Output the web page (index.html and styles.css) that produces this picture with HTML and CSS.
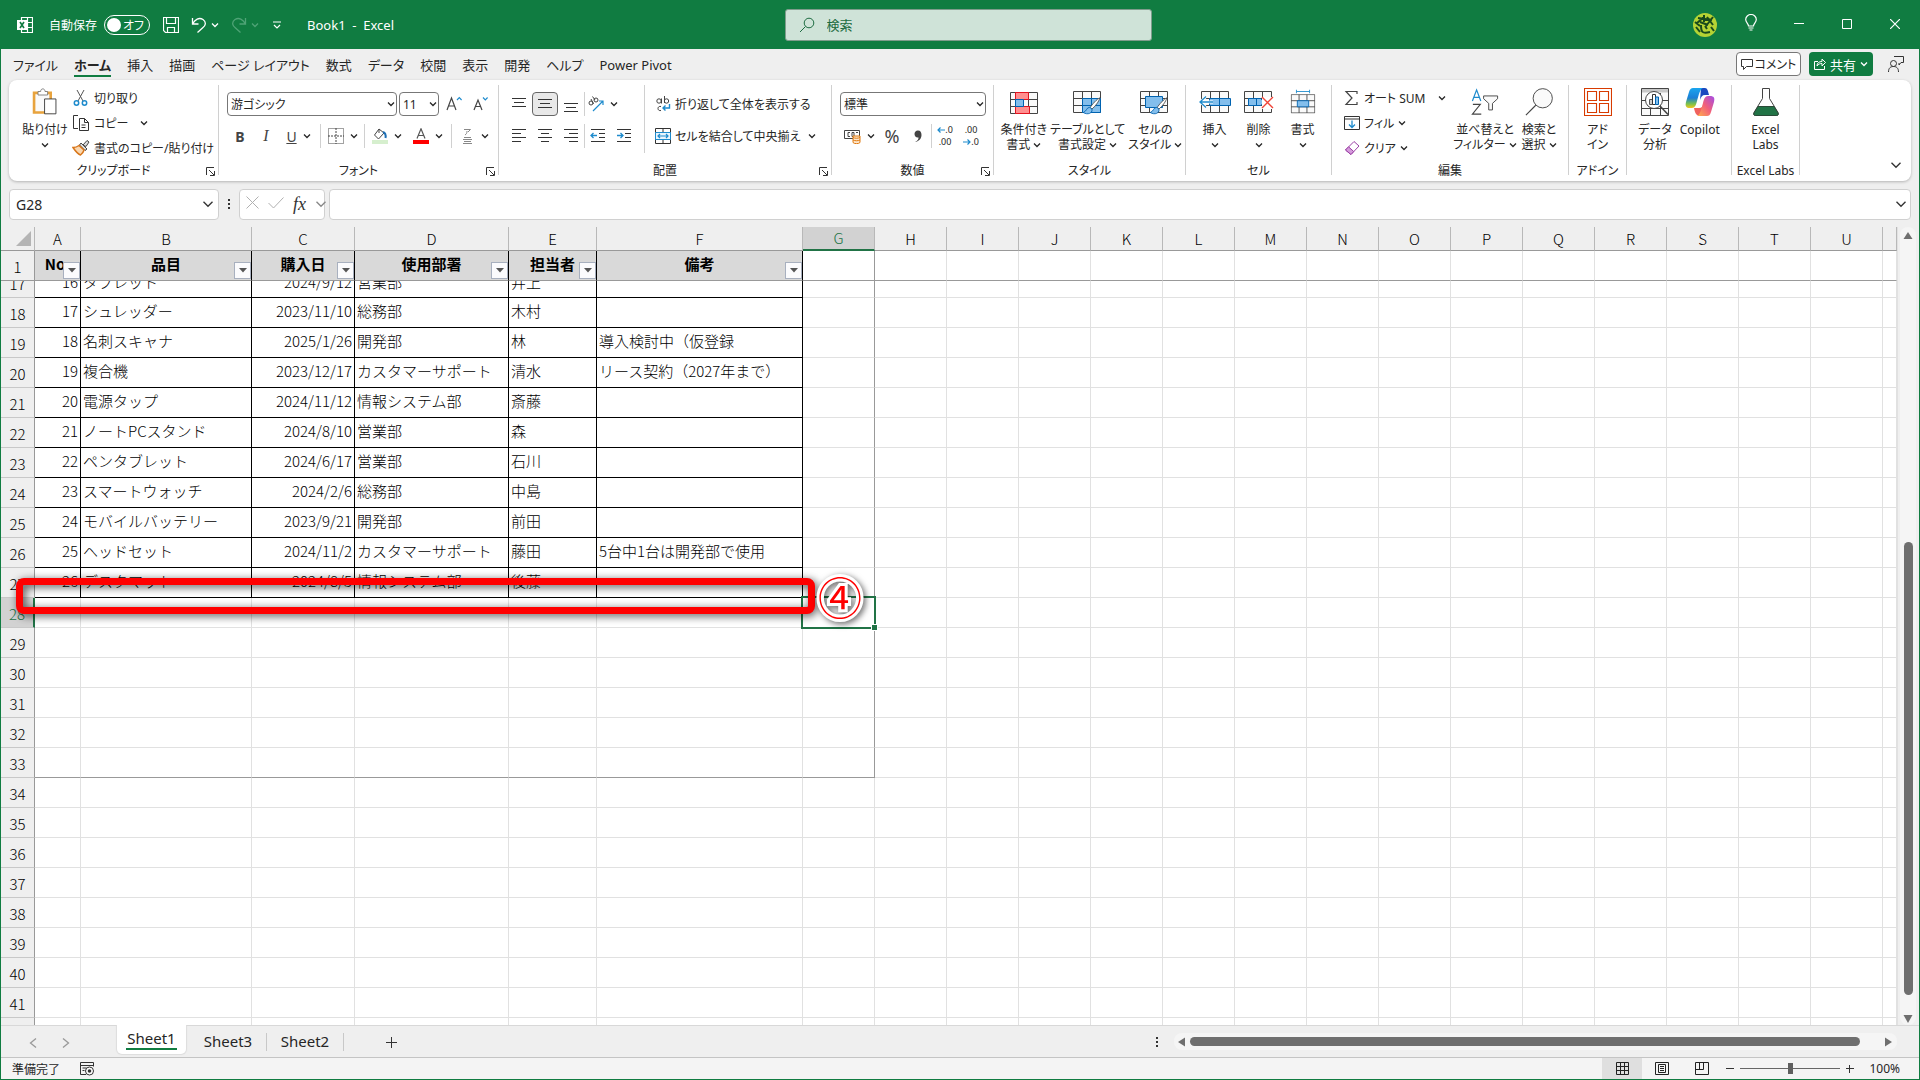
FILE: index.html
```html
<!DOCTYPE html>
<html lang="ja">
<head>
  <meta charset="UTF-8">
  <meta name="viewport" content="width=device-width, initial-scale=1.0">
  <title>Book1 - Excel</title>
  <link rel="stylesheet" href="styles.css">
</head>
<body>
  <svg class="symbols" aria-hidden="true">
    <symbol id="chev" viewBox="0 0 8 8"><path d="M1 2.500l3 3 3-3" fill="none" stroke="currentColor" stroke-width="1.300"/></symbol>
    <symbol id="launch" viewBox="0 0 9 9"><path d="M8 .5H.5V8M3 3l5 5M8.500 4v4.500H4" fill="none" stroke="#333"/></symbol>
    <symbol id="grid" viewBox="0 0 28 22"><path d="M.5.5h27v21H.5zM.5 7.500h27M.5 14.500h27M9.500.5v21M18.500.5v21" fill="#fafafa" stroke="#444"/></symbol>
    <symbol id="brush" viewBox="0 0 22 22"><path d="M20.500 1c-3 1-9 8-11 11l2 2C15 11 20 5 20.500 1z" fill="#fff" stroke="#444"/><path d="M9 12c-4 0-3 4-7.500 6 5 3 11 1 10-4z" fill="#83beec" stroke="#0063b1"/></symbol>
  </svg>

  <!-- Title bar -->
  <header class="titlebar">
    <div class="title-left">
      <svg class="app-icon" width="16" height="16" viewBox="0 0 16 16"><path d="M4.500.5h11v15h-11zM4 5.500h12M4 10.500h12M10.500 0v16" fill="none" stroke="#fff" stroke-width="1.200"/><rect y="3" width="10" height="10" fill="#fff"/><path d="M3 5l4 6M7 5l-4 6" stroke="#107c41" stroke-width="1.600"/></svg>
      <label class="autosave">自動保存
        <button class="toggle" role="switch" aria-checked="false"><i></i>オフ</button>
      </label>
      <button class="icon-btn save" aria-label="上書き保存"><svg width="16" height="16" viewBox="0 0 16 16"><path d="M.5.5h15v15h-13l-2-2zM3.500.5v6h9v-6M4.500 15.500v-5h7v5" fill="none" stroke="#fff" stroke-width="1.200"/></svg></button>
      <button class="icon-btn undo" aria-label="元に戻す"><svg width="16" height="16" viewBox="0 0 16 16"><path d="M1.500 1v6h6M1.500 7C4 2.500 8 0 12 2.500c4 3 2 6.500 0 8L6.500 15.500" fill="none" stroke="#fff" stroke-width="1.300"/></svg><svg class="chev"><use href="#chev"/></svg></button>
      <button class="icon-btn redo" aria-label="やり直し"><svg width="16" height="16" viewBox="0 0 16 16"><path d="M14.500 1v6h-6M14.500 7C12 2.500 8 0 4 2.500c-4 3-2 6.500 0 8l5.500 5" fill="none" stroke="currentColor" stroke-width="1.300"/></svg><svg class="chev"><use href="#chev"/></svg></button>
      <button class="icon-btn custom" aria-label="カスタマイズ"><svg width="8" height="8" viewBox="0 0 8 8"><path d="M0 1h8M1 4l3 3 3-3" fill="none" stroke="#fff" stroke-width="1.200"/></svg></button>
      <span class="doc-name">Book1&nbsp; -&nbsp; Excel</span>
    </div>
    <div class="search">
      <svg width="16" height="16" viewBox="0 0 16 16"><circle cx="10" cy="6" r="4.800" fill="none" stroke="#1c6b40"/><path d="M6.500 9.500L1 15" stroke="#1c6b40"/></svg>
      <input type="search" placeholder="検索" aria-label="検索">
    </div>
    <div class="title-right">
      <svg class="avatar" width="24" height="24" viewBox="0 0 24 24"><circle cx="12" cy="12" r="12" fill="#b5d334"/><path d="M5 5l14 2M4 10l7-6M11 2v7M7 9l8 3M14 4l6 8M20 4l-7 9M3 14l4 5M8 12c0 7 1 9 9 7M12 13l2 3M18 14l3 4M2 9l5 4" stroke="#184a1c" stroke-width="2" fill="none"/></svg>
      <button aria-label="ヒント"><svg width="12" height="17" viewBox="0 0 12 17"><path d="M3.500 12C3.500 9.500.700 8.500.700 5.500a5.300 5 0 0 1 10.600 0C11.300 8.500 8.500 9.500 8.500 12zM3.500 14h5M4.500 16h3" fill="none" stroke="#fff" stroke-width="1.200"/></svg></button>
      <button aria-label="最小化"><svg width="10" height="10" viewBox="0 0 10 10"><path d="M0 4.500h10" stroke="#fff"/></svg></button>
      <button aria-label="最大化"><svg width="10" height="10" viewBox="0 0 10 10"><path d="M.5.5h9v9h-9z" fill="none" stroke="#fff"/></svg></button>
      <button aria-label="閉じる"><svg width="10" height="10" viewBox="0 0 10 10"><path d="M0 0l10 10M10 0L0 10" stroke="#fff" stroke-width="1.200"/></svg></button>
    </div>
  </header>

  <nav class="tabs">
    <a href="#">ファイル</a>
    <a href="#" class="active">ホーム</a>
    <a href="#">挿入</a>
    <a href="#">描画</a>
    <a href="#">ページ レイアウト</a>
    <a href="#">数式</a>
    <a href="#">データ</a>
    <a href="#">校閲</a>
    <a href="#">表示</a>
    <a href="#">開発</a>
    <a href="#">ヘルプ</a>
    <a href="#">Power Pivot</a>
    <div class="tab-actions">
      <button class="comment-btn"><svg width="12" height="12" viewBox="0 0 12 12"><path d="M.5 1.500h11v7h-6l-3 3v-3h-2z" fill="none" stroke="#333"/></svg>コメント</button>
      <button class="share-btn"><svg width="12" height="12" viewBox="0 0 12 12"><path d="M4 3.500H.5v8h10V8M3 8c0-3 2-4.500 5-4.500V1l3.500 3.500L8 8V5.500C6 5.500 4.500 6 3 8z" fill="none" stroke="#fff"/></svg>共有<svg class="chev"><use href="#chev"/></svg></button>
      <button class="people-btn" aria-label="共同編集"><svg width="16" height="16" viewBox="0 0 16 16"><path d="M6 .5h9.500v6H13l-2 2.500V7M.5 16c0-4 2-5.500 5-5.500s5 1.500 5 5.500" fill="none" stroke="#333"/><circle cx="5.500" cy="7.500" r="3" fill="none" stroke="#333"/></svg></button>
    </div>
  </nav>

  <!-- Ribbon -->
  <section class="ribbon">
    <div class="group g-clip">
      <div class="body">
        <button class="big paste"><svg width="28" height="32" viewBox="0 0 28 32"><path d="M1.500 5.500h19v22.500h-19z" fill="#fafafa" stroke="#e8a33d" stroke-width="3"/><path d="M6 8V4h3c0-4 5-4 5 0h3v4z" fill="#fff" stroke="#777"/><path d="M13.500 12.500h13v17h-13z" fill="#fff" stroke="#333"/></svg><span>貼り付け</span><svg class="chev"><use href="#chev"/></svg></button>
        <div class="stack">
          <button class="small"><svg width="18" height="18" viewBox="0 0 18 18"><path d="M5 1l6 11M12 1L6 12" stroke="#555" fill="none"/><circle cx="4.500" cy="14" r="2.200" fill="none" stroke="#1e8bcd" stroke-width="1.500"/><circle cx="12.500" cy="14" r="2.200" fill="none" stroke="#1e8bcd" stroke-width="1.500"/></svg>切り取り</button>
          <button class="small"><svg width="18" height="18" viewBox="0 0 18 18"><path d="M6 14.500H1.500v-13H6M7.500 4.500h5l4 4v8h-9zM12.500 4.500v4h4M9.500 11h4M9.500 13.500h4" fill="none" stroke="#333"/></svg>コピー<svg class="chev far"><use href="#chev"/></svg></button>
          <button class="small"><svg width="18" height="18" viewBox="0 0 18 18"><path d="M11 6l4-4.500 2 1.500-3 4.500zM9 4l6 6-2 1.500L7.500 6z" fill="#ddd" stroke="#444"/><path d="M7 6.500C5 8 3 8.500 1 8.500c2 3 4 6 7.500 7.500 2-1.500 3-3 3.500-5z" fill="#fad7b0" stroke="#d8761a" stroke-width="1.500"/></svg>書式のコピー/貼り付け</button>
        </div>
      </div>
      <div class="foot">クリップボード<svg class="launch"><use href="#launch"/></svg></div>
    </div>

    <div class="group g-font">
      <div class="body rows">
        <div class="row">
          <span class="select"><select class="font-name" aria-label="フォント"><option>游ゴシック</option></select><svg class="chev"><use href="#chev"/></svg></span>
          <span class="select"><select class="font-size" aria-label="フォント サイズ"><option>11</option></select><svg class="chev"><use href="#chev"/></svg></span>
          <button class="tool" aria-label="拡大"><svg width="16" height="16" viewBox="0 0 16 16"><path d="M1 14L5.500 2 10 14M2.500 10h6" fill="none" stroke="#444" stroke-width="1.200"/><path d="M11 4l2.300-2.300L15.600 4" fill="none" stroke="#1e8bcd" stroke-width="1.200"/></svg></button>
          <button class="tool" aria-label="縮小"><svg width="16" height="16" viewBox="0 0 16 16"><path d="M2 14L6 4l4 10M3.500 10.500h5" fill="none" stroke="#444" stroke-width="1.200"/><path d="M11 1.500l2.300 2.300 2.300-2.300" fill="none" stroke="#1e8bcd" stroke-width="1.200"/></svg></button>
        </div>
        <div class="row">
          <button class="tool"><b>B</b></button>
          <button class="tool"><em>I</em></button>
          <button class="tool drop"><u>U</u><svg class="chev"><use href="#chev"/></svg></button>
          <i class="sep"></i>
          <button class="tool drop" aria-label="罫線"><svg width="16" height="16" viewBox="0 0 16 16"><path d="M.5.5h15v15H.5z" fill="none" stroke="#444" stroke-dasharray="1 1"/><path d="M8 0v16M0 8h16" stroke="#444" stroke-dasharray="2 1"/></svg><svg class="chev"><use href="#chev"/></svg></button>
          <i class="sep"></i>
          <button class="tool drop" aria-label="塗りつぶし"><svg width="16" height="16" viewBox="0 0 16 16"><path d="M7 1L2.500 7l4 4 5.500-6zM7 1v4" fill="#fff" stroke="#444"/><path d="M11 4c3 1 3 3 2.500 6" fill="none" stroke="#1e6fb5" stroke-width="2"/><path d="M0 12h16v4H0z" fill="#d6efce"/></svg><svg class="chev"><use href="#chev"/></svg></button>
          <button class="tool drop wide" aria-label="フォントの色"><svg width="16" height="16" viewBox="0 0 16 16"><path d="M4 10.500L8 .8l4 9.700M5.300 7.500h5.400" fill="none" stroke="#555" stroke-width="1.200"/><path d="M0 12h16v4H0z" fill="#f00"/></svg><svg class="chev"><use href="#chev"/></svg></button>
          <i class="sep"></i>
          <button class="tool drop" aria-label="ふりがな"><svg width="16" height="16" viewBox="0 0 16 16"><path d="M5 1.500h6.500L9 4M8 3c0 2-.5 3-2 4M5 9.500h7M4 11.500h9M5 13.500h7M4 15.500h9" fill="none" stroke="#888"/></svg><svg class="chev"><use href="#chev"/></svg></button>
        </div>
      </div>
      <div class="foot">フォント<svg class="launch"><use href="#launch"/></svg></div>
    </div>

    <div class="group g-align">
      <div class="body">
        <div class="rows align-tools">
          <div class="row">
            <button class="tool" aria-label="上揃え"><svg width="16" height="16" viewBox="0 0 16 16"><path d="M1 2.500h14M3 6.500h10M1 10.500h14" stroke="#333"/></svg></button>
            <button class="tool pressed" aria-label="上下中央揃え"><svg width="16" height="16" viewBox="0 0 16 16"><path d="M1 3.500h14M3 7.500h10M1 11.500h14" stroke="#333"/></svg></button>
            <button class="tool" aria-label="下揃え"><svg width="16" height="16" viewBox="0 0 16 16"><path d="M1 7.500h14M3 11.500h10M1 15.500h14" stroke="#333"/></svg></button>
            <i class="sep"></i>
            <button class="tool drop" aria-label="方向"><svg width="16" height="16" viewBox="0 0 16 16"><circle cx="3" cy="7" r="2" fill="none" stroke="#444"/><circle cx="8" cy="4" r="2" fill="none" stroke="#444"/><path d="M3 3l2.500 5M4.500.5L7 4" fill="none" stroke="#444"/><path d="M5 15L15 5M15 9V5h-4" fill="none" stroke="#1e8bcd" stroke-width="1.200"/></svg><svg class="chev"><use href="#chev"/></svg></button>
          </div>
          <div class="row">
            <button class="tool" aria-label="左揃え"><svg width="16" height="16" viewBox="0 0 16 16"><path d="M1 1.500h14M1 5.500h9M1 9.500h14M1 13.500h9" stroke="#333"/></svg></button>
            <button class="tool" aria-label="中央揃え"><svg width="16" height="16" viewBox="0 0 16 16"><path d="M1 1.500h14M4 5.500h8M1 9.500h14M4 13.500h8" stroke="#333"/></svg></button>
            <button class="tool" aria-label="右揃え"><svg width="16" height="16" viewBox="0 0 16 16"><path d="M1 1.500h14M6 5.500h9M1 9.500h14M6 13.500h9" stroke="#333"/></svg></button>
            <i class="sep"></i>
            <button class="tool" aria-label="インデントを減らす"><svg width="16" height="16" viewBox="0 0 16 16"><path d="M1 1.500h14M9 5.500h6M9 9.500h6M1 13.500h14" stroke="#333"/><path d="M7 7.500H1M3.500 5L1 7.500 3.500 10" stroke="#1e8bcd" fill="none" stroke-width="1.300"/></svg></button>
            <button class="tool" aria-label="インデントを増やす"><svg width="16" height="16" viewBox="0 0 16 16"><path d="M1 1.500h14M9 5.500h6M9 9.500h6M1 13.500h14" stroke="#333"/><path d="M1 7.500h6M4.500 5L7 7.500 4.500 10" stroke="#1e8bcd" fill="none" stroke-width="1.300"/></svg></button>
          </div>
        </div>
        <div class="rows wrap-tools">
          <button class="small"><svg width="16" height="16" viewBox="0 0 16 16"><circle cx="4" cy="5" r="2.200" fill="none" stroke="#444"/><path d="M6.500 2.500v5M9.500 0v7M6 10.500c-4-1-4 5 0 4" fill="none" stroke="#444"/><circle cx="11.500" cy="5" r="2.200" fill="none" stroke="#444"/><path d="M14.500 8v4H8M10.500 9.500L8 12l2.500 2.500" fill="none" stroke="#1e8bcd" stroke-width="1.400"/></svg>折り返して全体を表示する</button>
          <button class="small"><svg width="16" height="16" viewBox="0 0 16 16"><path d="M.5.5h15v15H.5zM8 0v4M8 12v4" fill="none" stroke="#333"/><path d="M.5 4.500h15v7H.5z" fill="#eaf5fd" stroke="#1e8bcd"/><path d="M3 8h10M5 6L3 8l2 2M11 6l2 2-2 2" fill="none" stroke="#1e8bcd" stroke-width="1.200"/></svg>セルを結合して中央揃え<svg class="chev end"><use href="#chev"/></svg></button>
        </div>
      </div>
      <div class="foot">配置<svg class="launch"><use href="#launch"/></svg></div>
    </div>

    <div class="group g-num">
      <div class="body rows">
        <div class="row">
          <span class="select"><select class="num-format" aria-label="表示形式"><option>標準</option></select><svg class="chev"><use href="#chev"/></svg></span>
        </div>
        <div class="row">
          <button class="tool drop" aria-label="通貨"><svg width="17" height="16" viewBox="0 0 17 16"><path d="M.5 2.500h15v8H.5z" fill="#fff" stroke="#444"/><path d="M6 4.500H4v4h2M8 4.500h2v4H8zM12 4.500h2" fill="none" stroke="#444"/><path d="M9 8h7v6.500c-1 1.500-6 1.500-7 0z" fill="#fde8cf" stroke="#e07a10"/><path d="M9 9.500c2 1 5 1 7 0M9 12c2 1 5 1 7 0" fill="none" stroke="#e07a10"/></svg><svg class="chev"><use href="#chev"/></svg></button>
          <button class="tool pct">%</button>
          <button class="tool comma" aria-label="桁区切り"><svg width="10" height="16" viewBox="0 0 10 16"><path d="M2 14c3-1.500 3.500-3 3.500-4.500C3 10 1.500 8 1.500 6A3.300 3.300 0 0 1 5 2.500C7.500 2.500 8.500 4.500 8.500 7 8.500 10 6.500 13.500 2 14z" fill="#444"/></svg></button>
          <i class="sep"></i>
          <button class="tool dec"><svg width="8" height="6" viewBox="0 0 8 6"><path d="M8 3H1M3.500.5L1 3l2.500 2.500" stroke="#1e8bcd" fill="none" stroke-width="1.200"/></svg>.0<br>.00</button>
          <button class="tool dec">.00<br><svg width="8" height="6" viewBox="0 0 8 6"><path d="M0 3h7M4.500.5L7 3 4.500 5.500" stroke="#1e8bcd" fill="none" stroke-width="1.200"/></svg>.0</button>
        </div>
      </div>
      <div class="foot">数値<svg class="launch"><use href="#launch"/></svg></div>
    </div>

    <div class="group g-style">
      <div class="body">
        <button class="big"><svg width="28" height="28" viewBox="0 0 28 28"><use href="#grid" y="4" width="28" height="22"/><path d="M5.500 4.500h13v7h-13zM5.500 18.500h14v7h-14z" fill="#ff8f8f" stroke="#e3131f"/><path d="M5.500 11.500h8v7h-8z" fill="#83beec" stroke="#0063b1"/></svg><span>条件付き<br>書式 <svg class="chev"><use href="#chev"/></svg></span></button>
        <button class="big"><svg width="30" height="28" viewBox="0 0 30 28"><use href="#grid" y="3" width="28" height="22"/><path d="M9.500 10.500h18v14h-18z" fill="#83beec" stroke="#0063b1"/><path d="M9.500 17.500h18M18.500 10.500v14" stroke="#0063b1"/><use href="#brush" x="8" y="9" width="21" height="19"/></svg><span>テーブルとして<br>書式設定 <svg class="chev"><use href="#chev"/></svg></span></button>
        <button class="big"><svg width="30" height="28" viewBox="0 0 30 28"><use href="#grid" y="3" width="28" height="22"/><path d="M5.500 8.500h17v11h-17z" fill="#83beec" stroke="#0063b1"/><use href="#brush" x="8" y="9" width="21" height="19"/></svg><span>セルの<br>スタイル <svg class="chev"><use href="#chev"/></svg></span></button>
      </div>
      <div class="foot">スタイル</div>
    </div>

    <div class="group g-cell">
      <div class="body">
        <button class="big"><svg width="32" height="28" viewBox="0 0 32 28"><use href="#grid" x="2" y="3" width="28" height="22"/><path d="M10.500 10.500h21v7h-21zM20.500 10.500v7" fill="#83beec" stroke="#0063b1"/><path d="M14 14H1.500M7 8.500L1.500 14 7 19.500" fill="none" stroke="#fff" stroke-width="3"/><path d="M14 14H1M7 8.500L1 14l6 5.500" fill="none" stroke="#1e8bcd" stroke-width="1.300"/></svg><span>挿入</span><svg class="chev"><use href="#chev"/></svg></button>
        <button class="big"><svg width="30" height="28" viewBox="0 0 30 28"><use href="#grid" y="3" width="28" height="22"/><path d="M4.500 10.500h12l4 4-4 3h-12zM12.500 10.500v7" fill="#83beec" stroke="#0063b1"/><path d="M18 9h12v12H18z" fill="#fff"/><path d="M18 9l11 11M29 9L18 20" stroke="#f04438" stroke-width="1.400"/></svg><span>削除</span><svg class="chev"><use href="#chev"/></svg></button>
        <button class="big"><svg width="28" height="32" viewBox="0 0 28 32"><use href="#grid" y="7" width="28" height="22"/><path d="M7.500 14.500h13v7h-13z" fill="#83beec" stroke="#0063b1"/><path d="M6.500 2v4M21.500 2v4M6.500 4h15" stroke="#1e8bcd"/></svg><span>書式</span><svg class="chev"><use href="#chev"/></svg></button>
      </div>
      <div class="foot">セル</div>
    </div>

    <div class="group g-edit">
      <div class="body">
        <div class="stack">
          <button class="small"><svg width="16" height="16" viewBox="0 0 16 16"><path d="M13 4V1.500H2L8 8l-6 6.500h11V12" fill="none" stroke="#444" stroke-width="1.200"/></svg>オート SUM<svg class="chev end"><use href="#chev"/></svg></button>
          <button class="small"><svg width="16" height="16" viewBox="0 0 16 16"><path d="M.5 1.500h15v13H.5zM.5 4h15" fill="none" stroke="#333"/><path d="M8 5.500v7M5 9.500l3 3 3-3" fill="none" stroke="#1e8bcd" stroke-width="1.300"/></svg>フィル<svg class="chev"><use href="#chev"/></svg></button>
          <button class="small"><svg width="16" height="16" viewBox="0 0 16 16"><path d="M10 1.500L15 6l-8 8.500L1.500 10z" fill="#fff" stroke="#9b3fa5"/><path d="M4.500 6.800L9.700 11.500 7 14.500 1.500 10z" fill="#d59bdb" stroke="#9b3fa5"/></svg>クリア<svg class="chev"><use href="#chev"/></svg></button>
        </div>
        <button class="big"><svg width="30" height="30" viewBox="0 0 30 30"><path d="M1.500 14L6 2l4.500 12M3 10h6" fill="none" stroke="#1e8bcd" stroke-width="1.300"/><path d="M2 17.500h8L1.500 28H11" fill="none" stroke="#444" stroke-width="1.200"/><path d="M13.500 8.500h15v3l-5.500 5v7h-4v-7l-5.500-5z" fill="#fafafa" stroke="#444"/></svg><span>並べ替えと<br>フィルター <svg class="chev"><use href="#chev"/></svg></span></button>
        <button class="big"><svg width="30" height="30" viewBox="0 0 30 30"><circle cx="19" cy="11" r="10.300" fill="#fafafa" stroke="#444"/><path d="M11.500 18.500L1 29" stroke="#444" stroke-width="1.200"/></svg><span>検索と<br>選択 <svg class="chev"><use href="#chev"/></svg></span></button>
      </div>
      <div class="foot">編集</div>
    </div>

    <div class="group g-addin">
      <div class="body">
        <button class="big"><svg width="28" height="28" viewBox="0 0 28 28"><path d="M.5.5h27v27H.5zM3.500 3.500h9v9h-9zM15.500 3.500h9v9h-9zM3.500 15.500h9v9h-9zM15.500 15.500h9v9h-9z" fill="#fff" stroke="#d83b01" stroke-width="1.100"/></svg><span>アド<br>イン</span></button>
      </div>
      <div class="foot">アドイン</div>
    </div>

    <div class="group g-data">
      <div class="body">
        <button class="big"><svg width="28" height="28" viewBox="0 0 28 28"><path d="M.5.5h27v27H.5zM.5 12.500h27M.5 20.500h27M9.500 5v22M19.500 5v22" fill="#fafafa" stroke="#444"/><path d="M1 1h26v3.500H1z" fill="#c8c8c8"/><circle cx="13" cy="12" r="8.500" fill="#fff" stroke="#444"/><path d="M19 18l8 8.500" stroke="#444" stroke-width="1.500"/><path d="M8.500 11.500h3v5h-3z" fill="#ccc" stroke="#555"/><path d="M11.500 6.500h3v10h-3z" fill="#fff" stroke="#333"/><path d="M14.500 9h3v7.500h-3z" fill="#83beec" stroke="#0063b1"/></svg><span>データ<br>分析</span></button>
        <button class="big"><svg width="30" height="28" viewBox="0 0 30 28">
          <defs>
            <linearGradient id="cp1" x1="0" y1="0" x2="0" y2="1"><stop offset="0" stop-color="#1aa5ee"/><stop offset=".5" stop-color="#1b7fd6"/><stop offset=".8" stop-color="#7dc34a"/><stop offset="1" stop-color="#f4c61c"/></linearGradient>
            <linearGradient id="cp2" x1="1" y1="0" x2="0" y2="1"><stop offset="0" stop-color="#a24be8"/><stop offset=".5" stop-color="#f2607a"/><stop offset="1" stop-color="#ffb04a"/></linearGradient>
          </defs>
          <path d="M16 0h4c2.500 0 3 3 4 7h-4c-3 0-4 2-5 5z" fill="#1b49c0"/>
          <path d="M7 28c-1 0 6 0 8 0-3 0-5-2-6-8h5c3 0 4-2 5-5l3 3-6 10z" fill="#f0625d"/>
          <path d="M8 0h10c-3 1-4 6-6 13-1 4-2 7-5 7H5c-4 0-5-2-4-6L4 4c1-3 2-4 4-4z" fill="url(#cp1)"/>
          <path d="M22 28H12c3-1 4-6 6-13 1-4 2-7 5-7h2c4 0 5 2 4 6l-3 10c-1 3-2 4-4 4z" fill="url(#cp2)"/></svg><span>Copilot</span></button>
      </div>
      <div class="foot"></div>
    </div>

    <div class="group g-labs">
      <div class="body">
        <button class="big"><svg width="28" height="28" viewBox="0 0 28 28"><path d="M10.500.5h7v10l8.500 14c1 2 0 3-1.500 3h-21C2 27.500 1 26.500 2 24.500l8.500-14z" fill="#fff" stroke="#444"/><path d="M6 18.500h16l4 6.500c.5 1.500 0 2.500-1.500 2.500h-21C2 27.500 1.500 26.500 2 25z" fill="#217346" stroke="#2a4a38"/></svg><span>Excel<br>Labs</span></button>
      </div>
      <div class="foot">Excel Labs</div>
    </div>
    <button class="collapse" aria-label="リボンを折りたたむ"><svg width="12" height="12" viewBox="0 0 8 8"><path d="M1 2.500l3 3 3-3" fill="none" stroke="#333" stroke-width=".9"/></svg></button>
  </section>

  <!-- Formula bar -->
  <section class="formula">
    <div class="name-box"><input type="text" value="G28" aria-label="名前ボックス"><svg width="12" height="12" viewBox="0 0 8 8"><path d="M1 2.500l3 3 3-3" fill="none" stroke="#333" stroke-width=".9"/></svg></div>
    <svg class="dots" width="2" height="10" viewBox="0 0 2 10"><path d="M0 0h2v2H0zM0 4h2v2H0zM0 8h2v2H0z" fill="#333"/></svg>
    <div class="fx-box">
      <button aria-label="キャンセル"><svg width="13" height="13" viewBox="0 0 13 13"><path d="M.5.5l12 12M12.500.5l-12 12" stroke="#b0b0b0"/></svg></button>
      <button aria-label="入力"><svg width="16" height="12" viewBox="0 0 16 12"><path d="M.5 6l5 5 10-10.500" fill="none" stroke="#b0b0b0"/></svg></button>
      <button class="fx">fx</button>
      <svg width="12" height="12" viewBox="0 0 8 8"><path d="M1 2.500l3 3 3-3" fill="none" stroke="#888" stroke-width=".9"/></svg>
    </div>
    <div class="formula-input"><input type="text" aria-label="数式バー"><svg width="12" height="12" viewBox="0 0 8 8"><path d="M1 2.500l3 3 3-3" fill="none" stroke="#333" stroke-width=".9"/></svg></div>
  </section>

  <!-- Sheet -->
  <main class="sheet">
    <div class="grid">
      <table>
        <colgroup id="cols"></colgroup>
        <thead id="head"></thead>
        <tbody id="rows"></tbody>
      </table>
      <div class="mark-box"></div>
      <div class="mark-num">④</div>
    </div>
    <div class="vscroll">
      <svg width="10" height="8" viewBox="0 0 10 8"><path d="M5 0l4.500 7h-9z" fill="#6f6f6f"/></svg>
      <div class="v-track"><div class="v-thumb"></div></div>
      <svg width="10" height="8" viewBox="0 0 10 8"><path d="M.5 0h9L5 8z" fill="#6f6f6f"/></svg>
    </div>
  </main>

  <nav class="sheet-tabs">
    <button class="nav" aria-label="前へ"><svg width="8" height="10" viewBox="0 0 8 10"><path d="M7 .5L1.500 5 7 9.500" fill="none" stroke="#999" stroke-width="1.300"/></svg></button>
    <button class="nav" aria-label="次へ"><svg width="8" height="10" viewBox="0 0 8 10"><path d="M1 .5L6.500 5 1 9.500" fill="none" stroke="#999" stroke-width="1.300"/></svg></button>
    <a href="#" class="sheet-tab active"><span>Sheet1</span></a>
    <a href="#" class="sheet-tab">Sheet3</a>
    <a href="#" class="sheet-tab">Sheet2</a>
    <button class="add" aria-label="新しいシート"><svg width="11" height="11" viewBox="0 0 11 11"><path d="M5.500 0v11M0 5.500h11" stroke="#333"/></svg></button>
    <svg class="split" width="2" height="10" viewBox="0 0 2 10"><path d="M0 0h2v2H0zM0 4h2v2H0zM0 8h2v2H0z" fill="#333"/></svg>
    <div class="hscroll">
      <svg width="8" height="10" viewBox="0 0 8 10"><path d="M7 .5v9L0 5z" fill="#6f6f6f"/></svg>
      <div class="h-track"><div class="h-thumb"></div></div>
      <svg width="8" height="10" viewBox="0 0 8 10"><path d="M0 .5v9L7 5z" fill="#6f6f6f"/></svg>
    </div>
  </nav>

  <footer class="status">
    <span>準備完了</span>
    <svg class="macro" width="15" height="14" viewBox="0 0 15 14"><path d="M6 12.500H.5V.5h13v4M.5 3.500h13M2.500 6h4M2.500 8.500h2" fill="none" stroke="#333"/><circle cx="9.500" cy="9" r="4" fill="#fff" stroke="#333"/><circle cx="9.500" cy="9" r="1.800" fill="#333"/></svg>
    <div class="views">
      <button class="on" aria-label="標準"><svg width="13" height="13" viewBox="0 0 13 13"><path d="M.5.5h12v12H.5zM.5 4.500h12M.5 8.500h12M4.500.5v12M8.500.5v12" fill="none" stroke="#222"/></svg></button>
      <button aria-label="ページ レイアウト表示"><svg width="14" height="13" viewBox="0 0 14 13"><path d="M.5.5h13v12H.5zM3.500 2.500h7v8h-7zM5 4.500h4M5 6.500h4M5 8.500h4" fill="none" stroke="#222"/></svg></button>
      <button aria-label="改ページ プレビュー"><svg width="14" height="13" viewBox="0 0 14 13"><path d="M.5.5h13v12H.5zM4.500.5v7M.5 7.500h8v-7" fill="none" stroke="#222"/></svg></button>
    </div>
    <button class="zoom-step" aria-label="縮小"><svg width="8" height="8" viewBox="0 0 8 8"><path d="M0 3.500h8" stroke="#333"/></svg></button>
    <input class="zoom" type="range" min="0" max="200" value="100" aria-label="ズーム">
    <button class="zoom-step" aria-label="拡大"><svg width="8" height="8" viewBox="0 0 8 8"><path d="M0 3.500h8M3.500 0v8" stroke="#333"/></svg></button>
    <button class="zoom-val">100%</button>
  </footer>

  <script src="script.js"></script>
</body>
</html>
```
FILE: styles.css
```css
* {
  box-sizing: border-box;
}
body {
  margin: 0;
  height: 100vh;
  display: flex;
  flex-direction: column;
  overflow: hidden;
  background: #efefef;
  border: 1px solid #107c41;
  border-top: 0;
  color: #262626;
  font: 12px "Noto Sans", "Noto Sans CJK JP", sans-serif;
  font-feature-settings: "palt";
}
button, input, select {
  font: inherit;
  font-feature-settings: inherit;
  color: inherit;
  border: 0;
  padding: 0;
  margin: 0;
  background: none;
  white-space: nowrap;
}
a {
  color: inherit;
  text-decoration: none;
}
svg {
  flex: none;
}
.symbols {
  display: none;
}
.chev {
  width: 8px;
  height: 8px;
}

/* title bar */
.titlebar {
  display: grid;
  grid-template-columns: 1fr 367px 1fr;
  align-items: center;
  height: 49px;
  padding-left: 16px;
  background: #107c41;
  color: #fff;
}
.title-left, .title-right, .autosave, .icon-btn {
  display: flex;
  align-items: center;
}
.autosave {
  gap: 7px;
  margin-left: 16px;
}
.toggle {
  display: flex;
  align-items: center;
  justify-content: space-between;
  width: 46px;
  height: 20px;
  padding: 0 5px 0 2px;
  border: 1px solid #fff;
  border-radius: 10px;
}
.toggle i {
  width: 14px;
  height: 14px;
  border-radius: 50%;
  background: #fff;
}
.icon-btn {
  gap: 4px;
  margin-left: 12px;
}
.save {
  margin-left: 13px;
}
.redo {
  color: #4fa376;
}
.custom {
  margin-left: 14px;
}
.doc-name {
  margin-left: 26px;
  font-size: 13px;
}
.search {
  display: flex;
  align-items: center;
  gap: 12px;
  height: 32px;
  padding: 0 13px;
  border: 1px solid #7f9c8c;
  border-radius: 3px;
  background: #cfe3d8;
}
.search input {
  flex: 1;
  outline: 0;
  font-size: 13px;
}
.search input::placeholder {
  color: #1c6b40;
}
.title-right {
  justify-content: flex-end;
}
.title-right button {
  width: 48px;
  height: 48px;
}
.avatar {
  margin-right: 10px;
}

/* ribbon tabs */
.tabs {
  display: flex;
  align-items: flex-start;
  gap: 16px;
  height: 31px;
  padding: 3px 8px 0 12px;
  font-size: 13px;
}
.tabs a {
  height: 25px;
  line-height: 26px;
}
.tabs .active {
  font-weight: 700;
  border-bottom: 2px solid #107c41;
}
.tab-actions {
  display: flex;
  gap: 8px;
  margin-left: auto;
}
.tab-actions button {
  display: flex;
  align-items: center;
  justify-content: center;
  gap: 4px;
  height: 24px;
  border-radius: 4px;
}
.tab-actions .comment-btn {
  width: 65px;
  border: 1px solid #777;
  background: #fff;
  font-size: 12px;
  gap: 2px;
}
.share-btn {
  width: 64px;
  background: #107c41;
  color: #fff;
}
.people-btn {
  width: 30px;
}

/* ribbon */
.ribbon {
  display: flex;
  margin: 0 8px;
  padding: 5px 0 6px;
  height: 101px;
  flex: none;
  background: #fff;
  border-radius: 8px;
  box-shadow: 0 1px 3px rgba(0,0,0,0.25);
}
.group {
  display: flex;
  flex-direction: column;
  flex: none;
  border-right: 1px solid #d0d0d0;
}
.g-clip { width: 210px; }
.g-font { width: 280px; }
.g-align { width: 333px; }
.g-num { width: 162px; }
.g-style { width: 192px; }
.g-cell { width: 146px; }
.g-edit { width: 237px; }
.g-addin { width: 58px; }
.g-data { width: 105px; }
.g-labs { width: 68px; }
.body {
  display: flex;
  justify-content: center;
  height: 77px;
}
.foot {
  position: relative;
  height: 13px;
  line-height: 18px;
  text-align: center;
  white-space: nowrap;
}
.launch {
  position: absolute;
  right: 3px;
  top: 5px;
  width: 9px;
  height: 9px;
}
.rows, .stack {
  display: flex;
  flex-direction: column;
}
.rows {
  justify-content: flex-start;
  padding-top: 3px;
}
.g-font .rows, .g-num .rows {
  padding-left: 8px;
}
.row {
  display: flex;
  align-items: center;
  height: 32px;
}
.big {
  display: flex;
  flex-direction: column;
  align-items: center;
  padding-top: 3px;
  line-height: 15px;
}
.big > svg:first-child {
  height: 28px;
  margin-bottom: 6px;
}
.big > .chev {
  margin-top: 4px;
}
.small {
  display: flex;
  align-items: center;
  gap: 4px;
  height: 25px;
}
.far {
  margin-left: 8px;
}
.end {
  margin-left: auto;
}
.paste {
  width: 42px;
}
.g-clip .body {
  justify-content: flex-start;
  padding-left: 15px;
  gap: 6px;
}
.select {
  position: relative;
  display: flex;
  margin-right: 2px;
}
.select select {
  appearance: none;
  height: 24px;
  padding: 0 3px;
  border: 1px solid #777;
  border-radius: 4px;
  background: #fff;
}
.select .chev {
  position: absolute;
  right: 2px;
  top: 8px;
}
.font-name { width: 170px; }
.font-size { width: 40px; }
.num-format { width: 146px; }
.tool {
  display: flex;
  align-items: center;
  justify-content: center;
  width: 26px;
  height: 24px;
}
.tool b, .tool em, .tool u {
  font-size: 14px;
  color: #444;
}
.tool em {
  font-family: "Liberation Serif", serif;
  font-size: 16px;
}
.drop {
  gap: 6px;
  width: 39px;
}
.wide {
  width: 43px;
}
.pressed {
  background: #e8e8e8;
  border: 1px solid #666;
  border-radius: 4px;
}
.sep {
  width: 1px;
  height: 24px;
  margin: 0 2px;
  background: #d0d0d0;
}
.g-align .sep, .g-num .sep {
  margin: 0;
}
.g-align .body {
  justify-content: flex-start;
  padding-left: 7px;
}
.align-tools {
  width: 139px;
  height: 68px;
  border-right: 1px solid #d0d0d0;
}
.align-tools .drop {
  width: 36px;
}
.wrap-tools {
  flex: 1;
  padding-left: 10px;
  padding-right: 15px;
}
.wrap-tools .small {
  height: 32px;
}
.pct {
  font-size: 18px;
  color: #444;
}
.dec {
  display: block;
  font-size: 9px;
  line-height: 12px;
}
.g-style .body {
  gap: 3px;
  padding-left: 4px;
}
.g-cell .big {
  width: 44px;
}
.g-edit .body {
  justify-content: flex-start;
  padding-left: 12px;
}
.g-edit .stack {
  width: 102px;
  margin-right: 12px;
}
.g-edit .big {
  width: 54px;
}
.g-data .body {
  gap: 8px;
}
.collapse {
  align-self: flex-end;
  margin-left: auto;
  margin-right: 9px;
}

/* formula bar */
.formula {
  display: flex;
  align-items: center;
  height: 46px;
  flex: none;
  padding: 0 8px;
}
.name-box, .fx-box, .formula-input {
  display: flex;
  align-items: center;
  height: 31px;
  background: #fff;
  border: 1px solid #d0d0d0;
  border-radius: 4px;
}
.name-box {
  width: 210px;
  padding: 0 4px 0 6px;
  font-size: 14px;
}
.name-box input, .formula-input input {
  flex: 1;
  min-width: 0;
  outline: 0;
}
.dots {
  margin: 0 9px;
}
.fx-box {
  width: 86px;
  gap: 9px;
  padding: 0 1px 0 6px;
}
.fx {
  width: 14px;
  font: italic 18px "Liberation Serif", serif;
  color: #333;
}
.formula-input {
  flex: 1;
  margin-left: 4px;
  padding: 0 3px 0 6px;
}

/* grid */
.sheet {
  display: flex;
  flex: 1;
  min-height: 0;
}
.grid {
  position: relative;
  flex: 1;
  min-width: 0;
  overflow: hidden;
  border-right: 1px solid #e1e1e1;
}
table {
  width: 100%;
  table-layout: fixed;
  border-collapse: separate;
  border-spacing: 0;
  font: 300 15px/25px "Noto Sans CJK JP", sans-serif;
  font-feature-settings: normal;
  color: #000;
}
td, th {
  position: relative;
  height: 30px;
  padding: 0 2px 4px;
  font-weight: 300;
  background: #fff;
  border-right: 1px solid #e1e1e1;
  border-bottom: 1px solid #e1e1e1;
  white-space: nowrap;
}
thead th {
  height: 24px;
  padding: 0;
  line-height: 22px;
  background: #efefef;
  border-right-color: #b8b8b8;
  border-bottom-color: #999;
}
thead .sel {
  background: #d2d2d2;
  color: #217346;
  border-bottom: 2px solid #217346;
}
.corner {
  width: 15px;
  height: 15px;
  margin-left: 15px;
  display: block;
}
tbody th {
  padding: 2px 0 0;
  line-height: 27px;
  background: #efefef;
  border-right-color: #999;
  border-bottom-color: #c8c8c8;
}
tbody th.sel {
  background: #d2d2d2;
  color: #217346;
  border-right: 2px solid #217346;
}
td.box {
  border-color: #000;
}
td.num {
  text-align: right;
}
td.head {
  background: #d9d9d9;
  font-weight: 700;
  text-align: center;
}
.frozen > * {
  border-bottom-color: #999;
}
.frozen td.head {
  border-bottom-color: #999;
}
.filter {
  position: absolute;
  right: 0;
  bottom: 1px;
  width: 17px;
  height: 17px;
  display: flex;
  align-items: center;
  justify-content: center;
  background: #fbfbfd;
  border: 1px solid #a8b0bf;
}
td.page-right {
  border-right-color: #999;
}
td.page-bottom {
  border-bottom-color: #999;
}
/* row partly scrolled under the frozen one */
.cut > * {
  height: 17px;
  padding-top: 0;
  padding-bottom: 0;
}
.cut div {
  display: flex;
  align-items: flex-end;
  justify-content: flex-start;
  height: 16px;
  overflow: hidden;
}
.cut td div {
  padding-bottom: 3px;
}
.cut .num div {
  justify-content: flex-end;
}
.cut th div {
  justify-content: center;
}
.cursor {
  position: absolute;
  z-index: 1;
  inset: -2px -2px -2px -2px;
  border: 2px solid #217346;
}
.cursor::after {
  content: "";
  position: absolute;
  right: -3px;
  bottom: -3px;
  width: 5px;
  height: 5px;
  background: #217346;
  outline: 1px solid #fff;
}
.mark-box {
  position: absolute;
  z-index: 2;
  left: 15px;
  top: 351px;
  width: 799px;
  height: 36px;
  border: 7px solid #f00;
  border-radius: 8px;
  filter: drop-shadow(2px 2px 4px rgba(0,0,0,0.7));
}
.mark-num {
  position: absolute;
  z-index: 2;
  left: 816px;
  top: 346px;
  width: 46px;
  line-height: 46px;
  text-align: center;
  font-size: 44px;
  font-family: "Noto Sans CJK JP", sans-serif;
  color: #f00;
  -webkit-text-stroke: 6px #fff;
  paint-order: stroke fill;
  filter: drop-shadow(2px 2px 3px rgba(0,0,0,0.6));
}

/* scroll bars */
.vscroll {
  display: flex;
  flex-direction: column;
  align-items: center;
  width: 16px;
  margin: 0 3px 0 2px;
  padding: 5px 0 2px;
  background: #f5f5f5;
  border-radius: 8px;
}
.v-track {
  flex: 1;
  display: flex;
  flex-direction: column;
  justify-content: flex-end;
  padding-bottom: 20px;
}
.v-thumb {
  width: 9px;
  height: 60%;
  border-radius: 5px;
  background: #6f6f6f;
}

/* sheet tabs */
.sheet-tabs {
  display: flex;
  align-items: center;
  height: 32px;
  flex: none;
  padding-left: 15px;
  border-top: 1px solid #d8d8d8;
  font-size: 15px;
}
.nav {
  width: 33px;
}
.sheet-tab {
  width: 77px;
  height: 18px;
  line-height: 16px;
  text-align: center;
  border-right: 1px solid #c8c8c8;
}
.sheet-tab.active {
  align-self: flex-start;
  width: 69px;
  height: 29px;
  margin: -1px 4px 0 35px;
  padding-top: 4px;
  background: #fff;
  border: 0;
  border-radius: 0 0 5px 5px;
  box-shadow: 0 0 1px 1px #ddd;
}
.active span {
  display: block;
  margin: 0 9px;
  height: 21px;
  line-height: 18px;
  border-bottom: 2px solid #107c41;
}
.add {
  width: 94px;
}
.split {
  margin-left: auto;
  margin-right: 16px;
}
.hscroll {
  display: flex;
  align-items: center;
  gap: 4px;
  width: 38%;
  height: 17px;
  margin-right: 22px;
  padding: 0 4px;
  border-radius: 8px;
  background: #f5f5f5;
}
.h-track {
  flex: 1;
}
.h-thumb {
  width: 97%;
  height: 9px;
  border-radius: 5px;
  background: #6f6f6f;
}

/* status bar */
.status {
  display: flex;
  align-items: center;
  height: 22px;
  flex: none;
  padding: 0 19px 0 11px;
  background: #f4f4f4;
  border-top: 1px solid #c4c4c4;
}
.macro {
  margin-left: 20px;
}
.views {
  display: flex;
  height: 100%;
  margin-left: auto;
  margin-right: 4px;
}
.views button {
  display: flex;
  align-items: center;
  justify-content: center;
  width: 40px;
}
.views .on {
  background: #dfdfdf;
}
.zoom-step {
  display: flex;
  width: 8px;
}
.zoom {
  appearance: none;
  width: 100px;
  height: 12px;
  margin: 0 6px;
  background: linear-gradient(#666, #666) center / 100% 1px no-repeat;
}
.zoom::-webkit-slider-thumb {
  appearance: none;
  width: 5px;
  height: 11px;
  background: #5f5f5f;
}
.zoom-val {
  width: 46px;
  text-align: right;
}
```
FILE: script.js
```js
const widths = [34, 46, 171, 103, 154, 88, 206];
const letters = 'ABCDEFGHIJKLMNOPQRSTU'.split('');
const header = ['No.', '品目', '購入日', '使用部署', '担当者', '備考'];
const items = [
  [16, 'タブレット', '2024/9/12', '営業部', '井上', ''],
  [17, 'シュレッダー', '2023/11/10', '総務部', '木村', ''],
  [18, '名刺スキャナ', '2025/1/26', '開発部', '林', '導入検討中（仮登録'],
  [19, '複合機', '2023/12/17', 'カスタマーサポート', '清水', 'リース契約（2027年まで）'],
  [20, '電源タップ', '2024/11/12', '情報システム部', '斎藤', ''],
  [21, 'ノートPCスタンド', '2024/8/10', '営業部', '森', ''],
  [22, 'ペンタブレット', '2024/6/17', '営業部', '石川', ''],
  [23, 'スマートウォッチ', '2024/2/6', '総務部', '中島', ''],
  [24, 'モバイルバッテリー', '2023/9/21', '開発部', '前田', ''],
  [25, 'ヘッドセット', '2024/11/2', 'カスタマーサポート', '藤田', '5台中1台は開発部で使用'],
  [26, 'デスクマット', '2024/8/5', '情報システム部', '後藤', '']
];
const COLS = 22;
const filterBtn = '<button class="filter" aria-label="フィルター"><svg width="8" height="5" viewBox="0 0 8 5"><path d="M0 0h8L4 4.500z" fill="#555"/></svg></button>';

// column widths, the last column takes what is left
let cols = '';
for (let i = 0; i < COLS; i++) {
  cols += '<col style="width:' + (widths[i] || 72) + 'px">';
}
document.getElementById('cols').innerHTML = cols + '<col>';

let head = '<tr><th><svg class="corner" viewBox="0 0 15 15"><path d="M15 0v15H0z" fill="#b4b4b4"/></svg></th>';
letters.forEach(l => {
  head += '<th' + (l === 'G' ? ' class="sel"' : '') + '>' + l + '</th>';
});
document.getElementById('head').innerHTML = head + '<th></th></tr>';

function makeRow(n, values, rowClass) {
  let html = '<tr class="' + rowClass + '"><th' + (n === 28 ? ' class="sel"' : '') + '><div>' + n + '</div></th>';
  for (let c = 0; c < COLS; c++) {
    const cls = [];
    let content = '';
    if (values && c < 6) {
      cls.push('box');
      content = '<div>' + values[c] + '</div>';
      if (n === 1) {
        cls.push('head');
        content += filterBtn;
      } else if (c === 0 || c === 2) {
        cls.push('num');
      }
    }
    if (c === 6 && n <= 33) cls.push('page-right');
    if (c <= 6 && n === 33) cls.push('page-bottom');
    if (c === 6 && n === 28) content = '<div class="cursor"></div>';
    html += '<td class="' + cls.join(' ') + '">' + content + '</td>';
  }
  return html + '</tr>';
}

let body = makeRow(1, header, 'frozen');
for (let n = 17; n <= 42; n++) {
  body += makeRow(n, items[n - 17], n === 17 ? 'cut' : '');
}
document.getElementById('rows').innerHTML = body;
```
